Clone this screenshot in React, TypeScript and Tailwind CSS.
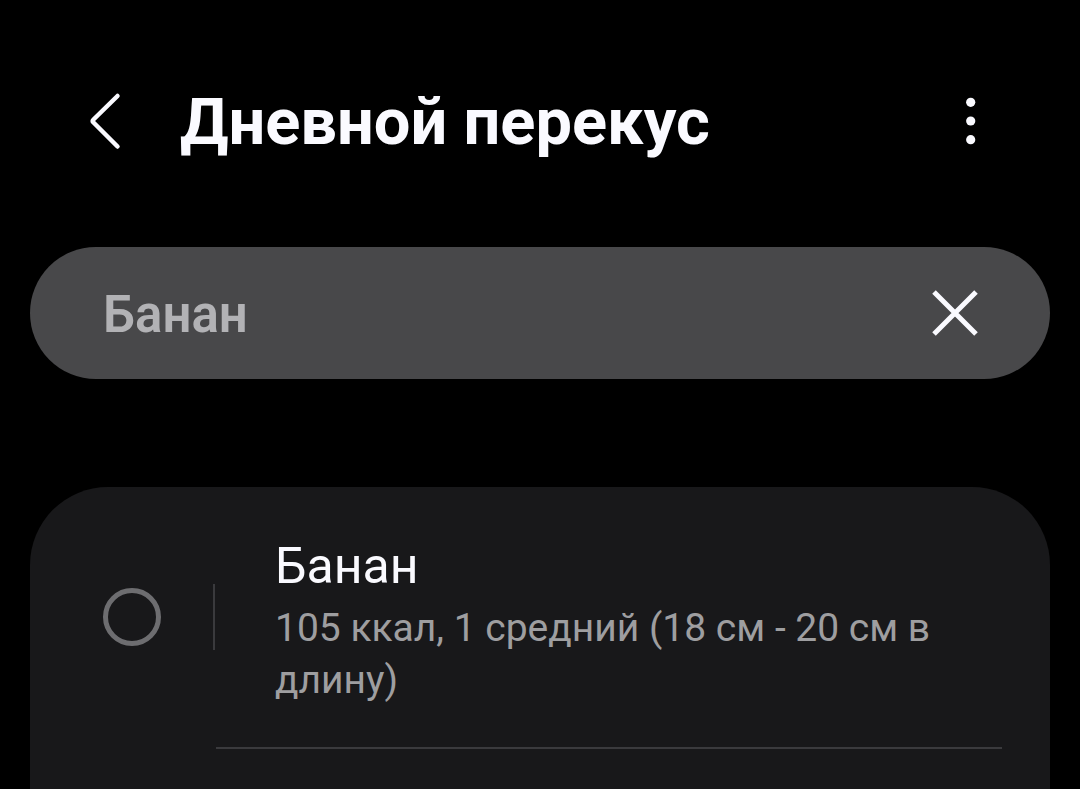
import { useState } from "react";

export default function App() {
  const [query, setQuery] = useState("Банан");
  return (
    <div className="min-h-screen bg-black px-[30px] font-['Roboto','Noto_Sans',sans-serif] text-[#fafaff]">
      <header className="flex items-center pt-[76px] pr-[54px] pl-[45px]">
        <button type="button" aria-label="Назад" className="flex h-[90px] w-[60px] items-center justify-center">
          <svg className="h-[60px] w-[40px]" viewBox="0 0 40 60" fill="none" stroke="currentColor" strokeWidth="4.5" strokeLinecap="round" strokeLinejoin="round">
            <path d="M32.5 5 8.5 28.5q-1.5 1.5 0 3L32.5 55.5" />
          </svg>
        </button>
        <h1 className="ml-[45px] flex-1 pt-0.5 text-[65px] leading-[86px] font-bold">Дневной перекус</h1>
        <button type="button" aria-label="Ещё" className="flex h-[90px] w-[50px] items-center justify-center">
          <svg className="h-[60px] w-[20px]" viewBox="0 0 20 60" fill="currentColor">
            <circle cx="9.7" cy="11.3" r="4.6" />
            <circle cx="9.7" cy="30" r="4.6" />
            <circle cx="9.7" cy="48.7" r="4.6" />
          </svg>
        </button>
      </header>
      <div className="mt-[81px] flex h-[132px] items-center rounded-full bg-[#48484a] pr-[65px] pl-[73px]">
        <input
          type="text"
          aria-label="Поиск"
          value={query}
          onChange={(e) => setQuery(e.target.value)}
          className="min-w-0 flex-1 bg-transparent pt-1 text-[51px] font-semibold text-[#b2b2b5] outline-none"
        />
        <button type="button" aria-label="Очистить" onClick={() => setQuery("")} className="flex size-[60px] items-center justify-center">
          <svg className="size-[60px]" viewBox="0 0 60 60" fill="none" stroke="currentColor" strokeWidth="5">
            <path d="m9 9 42 42M51 9 9 51" />
          </svg>
        </button>
      </div>
      <main className="mt-[108px] min-h-[302px] rounded-t-[78px] bg-[#18181a] pr-[48px] pl-[73px]">
        <label className="flex items-center pt-[49px]">
          <span className="flex shrink-0 items-center gap-[52px] pb-2">
            <input type="checkbox" className="size-[58px] appearance-none rounded-full border-[5px] border-[#6d6d70] checked:bg-[#6d6d70]" />
            <span className="h-[66px] w-[2px] bg-[#3a3a3d]" />
          </span>
          <span className="ml-[60px] flex-1">
            <span className="block text-[50px] leading-[60px]">Банан</span>
            <span className="mt-1.5 block text-[39px] leading-[52px] text-[#9e9ea0]">105 ккал, 1 средний (18 см - 20 см в длину)</span>
          </span>
        </label>
        <hr className="mt-[41px] ml-[113px] border-t-2 border-[#3a3a3d]" />
      </main>
    </div>
  );
}
